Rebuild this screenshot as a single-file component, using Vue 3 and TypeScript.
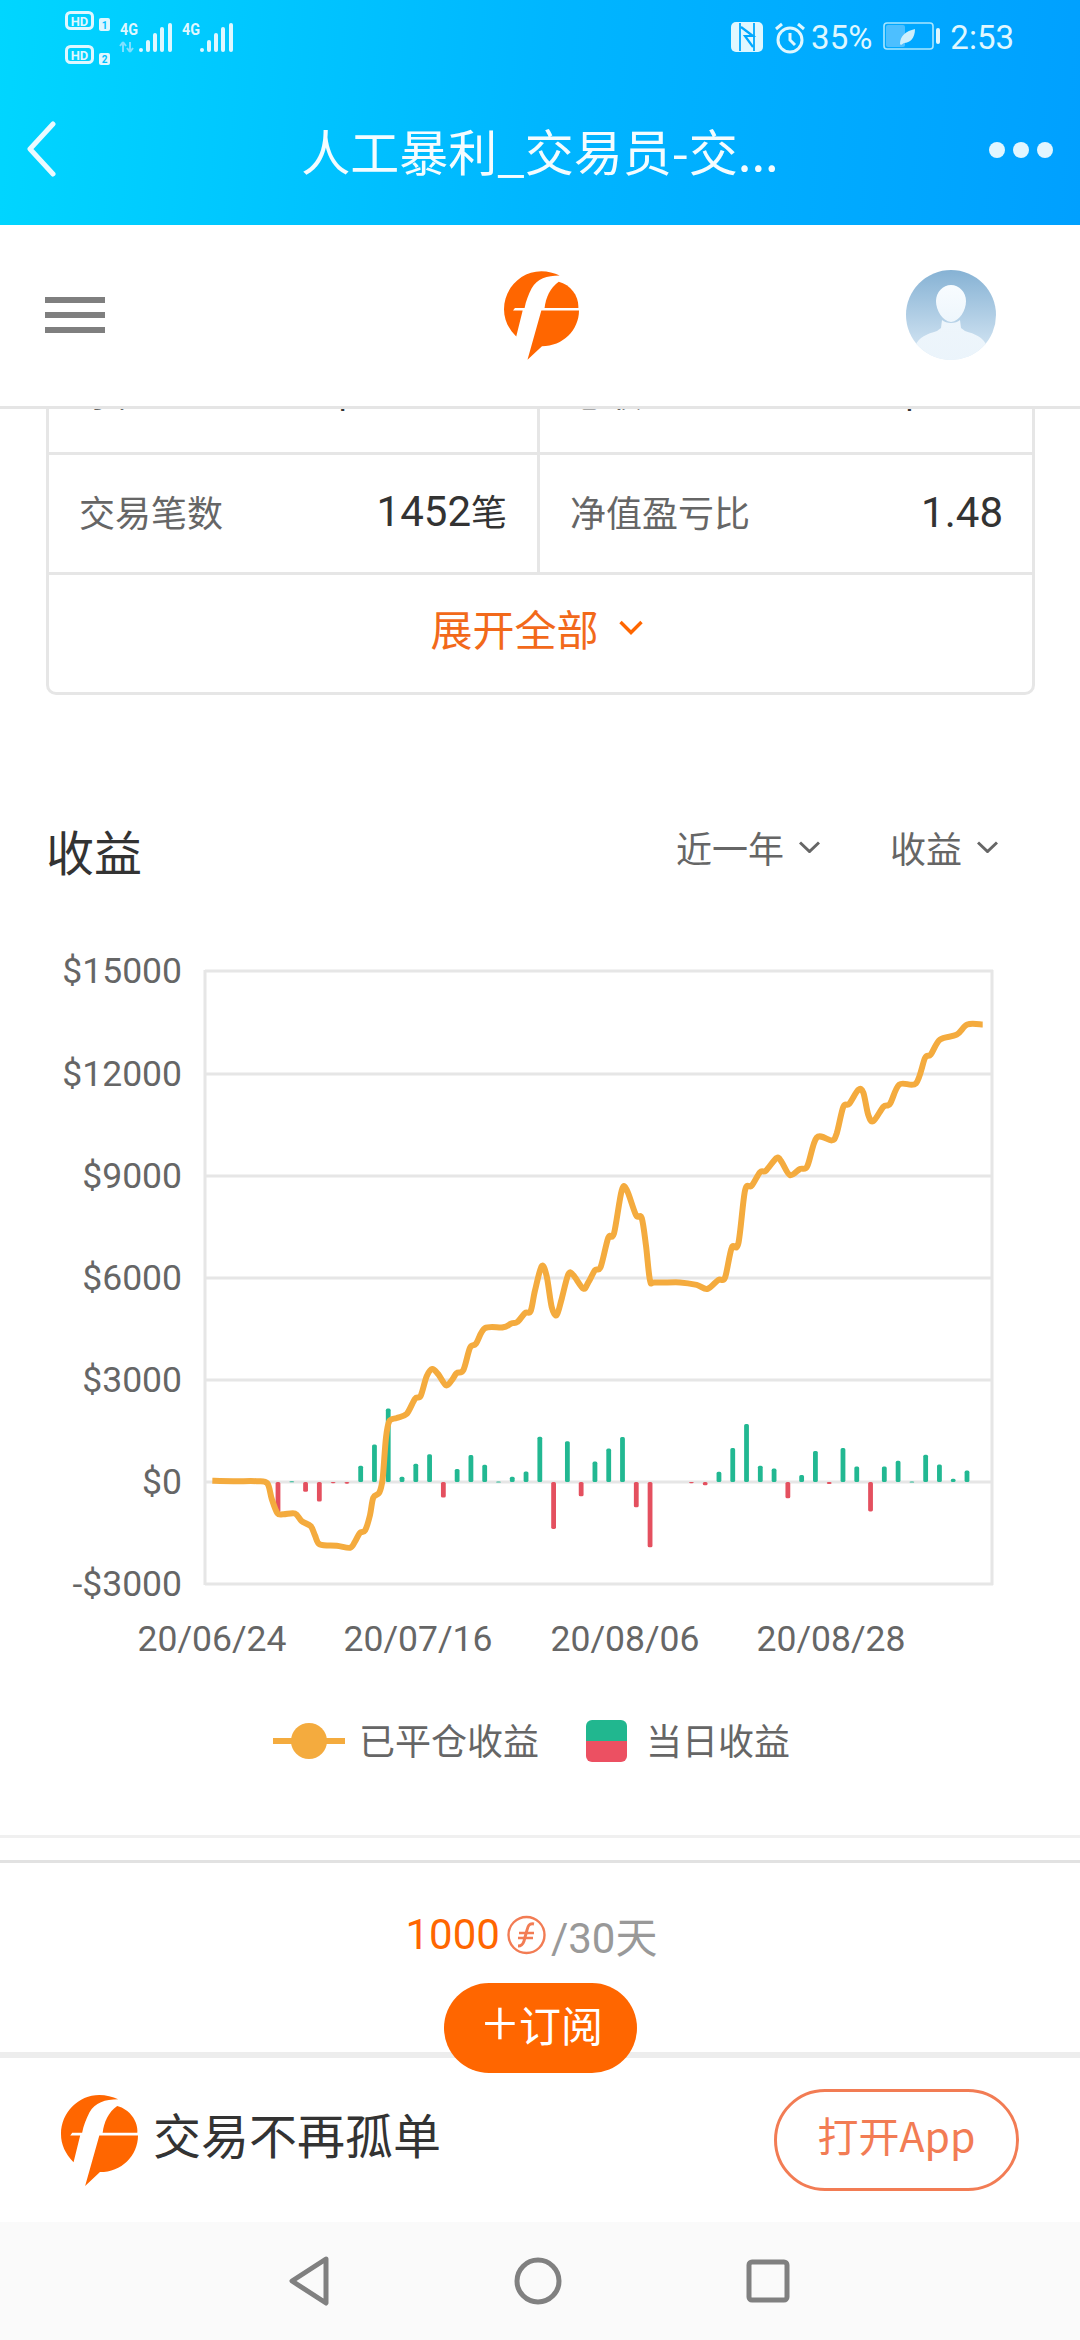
<script setup lang="ts">
const gridYs = [971, 1074, 1176, 1278, 1380, 1482, 1584]
const yLabels = ['$15000', '$12000', '$9000', '$6000', '$3000', '$0', '-$3000']
const xLabels = [
  { x: 212, t: '20/06/24' },
  { x: 418, t: '20/07/16' },
  { x: 625, t: '20/08/06' },
  { x: 831, t: '20/08/28' }
]
const rawBars: [number, number][] = [
  [-3, -2], [-1, -2], [0, -75], [1, 2], [2, -24], [3, -48], [4, -3], [5, -4], [6, 40], [7, 92], [8, 180], [9, 13], [10, 45], [11, 68], [12, -38], [13, 32], [14, 66], [15, 42], [16, 1], [17, 13], [18, 26], [19, 111], [20, -115], [21, 100], [22, -35], [23, 50], [24, 82], [25, 110], [26, -62], [27, -160], [30, -3], [31, -8], [32, 25], [33, 83], [34, 142], [35, 40], [36, 33], [37, -40], [38, 17], [39, 76], [40, -5], [41, 83], [42, 38], [43, -72], [44, 38], [45, 52], [46, 1], [47, 67], [48, 43], [49, 8], [50, 28]
]
const bars = rawBars.map(([i, h]) => {
  const x = 278 + i * 13.78
  const real = Math.abs(h) / 2.45
  return {
    x: x - 2.4,
    y: h >= 0 ? 1482 - real : 1482,
    h: Math.max(real, 1),
    c: h >= 0 ? '#22b892' : '#e4505f'
  }
})
const a: [number, number][] = [[97,1276],[160,1277],[230,1277],[262,1282],[275,1320],[292,1355],[310,1358],[345,1356],[365,1375],[392,1387],[405,1410],[420,1432],[470,1435],[510,1440],[525,1425],[540,1403],[555,1398],[570,1360],[580,1317],[598,1305],[608,1270],[618,1170],[628,1130],[650,1122],[680,1112],[705,1075],[722,1068],[740,1020],[757,1002],[775,1015],[798,1042],[815,1030],[830,1012],[850,1005],[870,950],[888,940],[915,902],[970,900],[995,890],[1012,887],[1035,865],[1052,860],[1065,810],[1085,750],[1100,775],[1115,850],[1130,870],[1145,830],[1165,770],[1180,772],[1210,805],[1225,790],[1245,760]]
const b: [number, number][] = [[122,752],[145,680],[162,670],[185,565],[200,563],[228,625],[245,632],[258,700],[270,785],[285,790],[360,790],[410,796],[442,806],[475,784],[495,778],[515,705],[535,695],[555,565],[575,553],[600,520],[618,516],[650,485],[665,495],[690,527],[720,512],[742,505],[770,435],[815,442],[830,425],[850,360],[868,352],[895,318],[910,325],[925,380],[940,395],[970,360],[990,352],[1018,305],[1068,302],[1095,240],[1112,232],[1140,195],[1190,183],[1222,158],[1268,158]]
const pts = [
  ...a.map(([x, y]) => [180 + x / 3, 960 + y / 2.45]),
  ...b.map(([x, y]) => [560 + x / 3, 960 + y / 2.45])
]
function smooth(p: number[][]): string {
  let d = `M${p[0][0]},${p[0][1]}`
  for (let i = 0; i < p.length - 1; i++) {
    const p0 = p[Math.max(i - 1, 0)]
    const p1 = p[i]
    const p2 = p[i + 1]
    const p3 = p[Math.min(i + 2, p.length - 1)]
    const k = 0.16
    d += ` C${(p1[0] + (p2[0] - p0[0]) * k).toFixed(1)},${(p1[1] + (p2[1] - p0[1]) * k).toFixed(1)} ${(p2[0] - (p3[0] - p1[0]) * k).toFixed(1)},${(p2[1] - (p3[1] - p1[1]) * k).toFixed(1)} ${p2[0].toFixed(1)},${p2[1].toFixed(1)}`
  }
  return d
}
const linePath = smooth(pts)
const cellBars = [
  { x: 0, h: 4 }, { x: 7, h: 12 }, { x: 14, h: 19 }, { x: 21, h: 25 }, { x: 29, h: 29 }
]
</script>

<template>
  <div class="app">
    <header class="top">
      <div class="status">
        <svg class="st-left" viewBox="0 0 180 50" width="180" height="50">
          <rect x="1.5" y="1.5" width="26" height="16" rx="4" fill="none" stroke="#dff7ff" stroke-width="3" />
          <text x="14.5" y="14.5" text-anchor="middle" class="hd">HD</text>
          <rect x="34" y="7" width="11" height="13" rx="2" fill="#dff7ff" />
          <text x="39.5" y="17.5" text-anchor="middle" class="sim">1</text>
          <rect x="1.5" y="35.5" width="26" height="16" rx="4" fill="none" stroke="#dff7ff" stroke-width="3" />
          <text x="14.5" y="48.5" text-anchor="middle" class="hd">HD</text>
          <rect x="34" y="42" width="11" height="12" rx="2" fill="#dff7ff" />
          <text x="39.5" y="52" text-anchor="middle" class="sim">2</text>
          <text x="55" y="24" class="fourg" textLength="18" lengthAdjust="spacingAndGlyphs">4G</text>
          <text x="117" y="24" class="fourg" textLength="18" lengthAdjust="spacingAndGlyphs">4G</text>
          <path d="M58 41V31M58 31l-3 4M58 31l3 4M65 31v10M65 41l-3-4M65 41l3-4" stroke="#7fe0ff" stroke-width="2" fill="none" />
          <g fill="#dff7ff">
            <rect v-for="c in cellBars" :key="c.x" :x="74 + c.x" :y="41 - c.h" width="4" :height="c.h" rx="2" />
            <rect v-for="c in cellBars" :key="'s' + c.x" :x="135 + c.x" :y="41 - c.h" width="4" :height="c.h" rx="2" />
          </g>
        </svg>
        <div class="st-right">
          <svg viewBox="0 0 32 30" width="32" height="30">
            <rect width="32" height="30" rx="5" fill="#dff7ff" />
            <path d="M9 1v28M23 1v28" stroke="#00a8ff" stroke-width="1.8" fill="none" />
            <path d="M10 5l12 9h-8l8 11" stroke="#00a8ff" stroke-width="2.2" fill="none" />
          </svg>
          <svg class="alarm" viewBox="0 0 32 32" width="32" height="32">
            <circle cx="16" cy="18" r="12" fill="none" stroke="#dff7ff" stroke-width="3" />
            <path d="M16 11v7l5 5M2 7l6-5M30 7l-6-5" fill="none" stroke="#dff7ff" stroke-width="3" />
          </svg>
          <span class="st-text pct">35%</span>
          <svg class="batt" viewBox="0 0 57 28" width="57" height="28">
            <rect x="1" y="1" width="49" height="26" rx="3" fill="none" stroke="#a8e6ff" stroke-width="1.6" />
            <rect x="3" y="3" width="19" height="22" rx="2" fill="#4dbfff" />
            <rect x="53" y="6" width="4" height="16" rx="2" fill="#dff7ff" />
            <path d="M17 22c0-8 6-13 15-15 0 9-5 14-11 14l-3 2z" fill="#cdeffc" />
          </svg>
          <span class="st-text time">2:53</span>
        </div>
      </div>
      <div class="titlebar">
        <svg class="back" viewBox="0 0 30 56" width="30" height="56">
          <path d="M26 3 3 28l23 25" fill="none" stroke="#eafaff" stroke-width="5" stroke-linecap="round" stroke-linejoin="round" />
        </svg>
        <h1 class="title">人工暴利_交易员-交...</h1>
        <div class="dots"><i></i><i></i><i></i></div>
      </div>
    </header>

    <nav class="nav">
      <div class="burger"><i></i><i></i><i></i></div>
      <svg class="logo" viewBox="92 72 233 275" width="75" height="89">
        <g fill="#ff6600">
          <path d="M130 275C105 250 92 222 92 190 92 125 145 72 208 72c20 0 40 5 57 13C225 85 195 95 178 125 168 145 160 165 156 186H126l-6 8h30z" />
          <path d="M218 186c4-32 17-62 44-81 38 10 63 45 61 81z" />
          <path d="M208 194h117c0 61-50 111-115 111l-45 42z" />
        </g>
      </svg>
      <svg class="avatar" viewBox="0 0 90 90" width="90" height="90">
        <defs>
          <linearGradient id="avBg" x1="0" y1="0" x2="0" y2="1">
            <stop offset="0" stop-color="#86b2d4" />
            <stop offset="1" stop-color="#dbeaf6" />
          </linearGradient>
          <linearGradient id="avFg" x1="0" y1="0" x2="0" y2="1">
            <stop offset="0" stop-color="#f8fcff" />
            <stop offset="1" stop-color="#eef6fc" />
          </linearGradient>
          <clipPath id="avClip"><circle cx="45" cy="45" r="45" /></clipPath>
        </defs>
        <g clip-path="url(#avClip)">
          <rect width="90" height="90" fill="url(#avBg)" />
          <path d="M45 15c8 0 15 7 15 16 0 9-6 20-15 21-9-1-15-12-15-21 0-9 7-16 15-16z" fill="url(#avFg)" />
          <path d="M36 50c4 4 14 4 18 0l1 8 4 3c10 3 18 6 22 15l-8 14H17L9 76c4-9 12-12 22-15l4-3z" fill="url(#avFg)" opacity=".85" />
        </g>
      </svg>
    </nav>

    <main class="main">
      <section class="card">
        <div class="row">
          <div class="cell"><span class="lab">净值</span><span class="val">$1343.20</span></div>
          <div class="cell"><span class="lab">总收入</span><span class="val">$12.5</span></div>
        </div>
        <div class="row">
          <div class="cell"><span class="lab">交易笔数</span><span class="val">1452<small>笔</small></span></div>
          <div class="cell"><span class="lab">净值盈亏比</span><span class="val">1.48</span></div>
        </div>
        <div class="more">
          <span>展开全部</span>
          <svg viewBox="0 0 24 15" width="24" height="15"><path d="M1.5 2l10.500 10.500L22.500 2" fill="none" stroke="#ff6600" stroke-width="3.4" /></svg>
        </div>
      </section>

      <div class="head">
        <h2>收益</h2>
        <div class="filters">
          <span class="filter">近一年<svg viewBox="0 0 21 12" width="21" height="12"><path d="M1 1.500l9.500 9 9.500-9" fill="none" stroke="#666" stroke-width="3" /></svg></span>
          <span class="filter">收益<svg viewBox="0 0 21 12" width="21" height="12"><path d="M1 1.500l9.500 9 9.500-9" fill="none" stroke="#666" stroke-width="3" /></svg></span>
        </div>
      </div>

      <svg class="chart" viewBox="0 950 1080 730" width="1080" height="730">
        <g stroke="#e6e6e6" stroke-width="3">
          <line v-for="y in gridYs" :key="y" x1="205" x2="993" :y1="y" :y2="y" />
          <line x1="205" x2="205" y1="970" y2="1585" />
          <line x1="992" x2="992" y1="970" y2="1585" />
        </g>
        <rect v-for="(b2, i) in bars" :key="i" :x="b2.x" :y="b2.y" width="4.8" :height="b2.h" rx="1.6" :fill="b2.c" />
        <path :d="linePath" fill="none" stroke="#f4ab3e" stroke-width="6" stroke-linejoin="round" />
        <g class="axis">
          <text v-for="(t, i) in yLabels" :key="t" x="182" :y="gridYs[i] + 3" text-anchor="end" dominant-baseline="middle">{{ t }}</text>
          <text v-for="l in xLabels" :key="l.t" :x="l.x" y="1651" text-anchor="middle">{{ l.t }}</text>
        </g>
      </svg>

      <div class="legend">
        <span class="mark"><i class="dash"></i><i class="dot"></i></span>
        <span class="lg-t">已平仓收益</span>
        <span class="swatch"></span>
        <span class="lg-t">当日收益</span>
      </div>

      <div class="rule-a"></div>
      <div class="rule-b"></div>

      <div class="price">
        <span class="amount">1000</span>
        <svg class="coin" viewBox="0 0 39 40" width="39" height="40">
          <circle cx="19.500" cy="20" r="18" fill="none" stroke="#f27c54" stroke-width="2.4" />
          <path d="M27 9c-5-1-6 2-7 6l-3 11c-1 3-2 5-6 5" fill="none" stroke="#f27c54" stroke-width="3" />
          <path d="M12 18h15M11 23h15" fill="none" stroke="#f27c54" stroke-width="2.4" />
        </svg>
        <span class="per">/30天</span>
      </div>
    </main>

    <footer class="promo">
      <svg class="logo-s" viewBox="92 72 233 275" width="77" height="91">
        <g fill="#ff6600">
          <path d="M130 275C105 250 92 222 92 190 92 125 145 72 208 72c20 0 40 5 57 13C225 85 195 95 178 125 168 145 160 165 156 186H126l-6 8h30z" />
          <path d="M218 186c4-32 17-62 44-81 38 10 63 45 61 81z" />
          <path d="M208 194h117c0 61-50 111-115 111l-45 42z" />
        </g>
      </svg>
      <span class="slogan">交易不再孤单</span>
      <span class="open">打开App</span>
    </footer>

    <div class="sysnav">
      <svg viewBox="0 0 42 50" width="42" height="50"><path d="M38 3 4 25l34 22z" fill="none" stroke="#808080" stroke-width="5" stroke-linejoin="round" /></svg>
      <svg viewBox="0 0 48 48" width="48" height="48"><circle cx="24" cy="24" r="21" fill="none" stroke="#808080" stroke-width="5" /></svg>
      <svg viewBox="0 0 44 44" width="44" height="44"><rect x="3" y="3" width="38" height="38" rx="3" fill="none" stroke="#808080" stroke-width="5" /></svg>
    </div>

    <button class="sub"><span class="plus">+</span>订阅</button>
  </div>
</template>

<style>
html, body { margin: 0; background: #fff; }
</style>

<style scoped>
.app {
  position: relative;
  width: 1080px;
  height: 2340px;
  display: flex;
  flex-direction: column;
  overflow: hidden;
  background: #fff;
  font-family: Roboto, "Noto Sans CJK SC", sans-serif;
}
.top {
  height: 225px;
  flex: none;
  background: linear-gradient(95deg, #00d6ff 0%, #00b6ff 50%, #00a0ff 100%);
}
.status {
  height: 75px;
  display: flex;
  justify-content: space-between;
  padding: 11px 66px 0 65px;
  box-sizing: border-box;
}
.st-left { overflow: visible; }
.hd { font: 700 13px Roboto, sans-serif; fill: #dff7ff; }
.sim { font: 700 10px Roboto, sans-serif; fill: #00c0ff; }
.fourg { font: 700 17px Roboto, sans-serif; fill: #dff7ff; }
.st-right {
  display: flex;
  align-items: flex-start;
  height: 40px;
  padding-top: 11px;
}
.alarm { margin-left: 11px; }
.st-text { font-size: 33px; line-height: 30px; color: #dff7ff; margin-top: 1px; }
.pct { margin-left: 5px; }
.batt { margin-left: 11px; }
.time { margin-left: 10px; }
.titlebar {
  height: 150px;
  position: relative;
  display: flex;
  align-items: center;
  justify-content: center;
}
.back { position: absolute; left: 27px; top: 46px; }
.title {
  margin: 0;
  padding-bottom: 2px;
  font: 400 49px "Noto Sans CJK SC", sans-serif;
  color: #f4fcff;
}
.dots {
  position: absolute;
  right: 27px;
  top: 67px;
  display: flex;
  gap: 8px;
}
.dots i {
  width: 16px;
  height: 16px;
  border-radius: 50%;
  background: #e2f6ff;
}
.nav {
  height: 184px;
  flex: none;
  box-sizing: border-box;
  border-bottom: 3px solid #e5e5e5;
  background: #fff;
  position: relative;
  z-index: 2;
  display: flex;
  align-items: center;
  justify-content: space-between;
  padding: 0 84px 2px 45px;
}
.burger { display: flex; flex-direction: column; gap: 9px; }
.burger i { display: block; width: 60px; height: 6px; background: #7f7f7f; }
.logo { position: absolute; left: 504px; top: 46px; }
.main {
  flex: 1;
  min-height: 0;
  overflow: hidden;
}
.card {
  margin: -74px 45px 0 46px;
  border: 3px solid #e6e6e6;
  border-top: 0;
  border-radius: 0 0 10px 10px;
}
.row {
  display: grid;
  grid-template-columns: 488px 1fr;
  height: 120px;
  box-sizing: border-box;
  border-bottom: 3px solid #e6e6e6;
}
.cell {
  display: flex;
  align-items: center;
  justify-content: space-between;
  padding: 0 30px 0 30px;
}
.cell + .cell { border-left: 3px solid #e6e6e6; padding-right: 29px; }
.lab {
  font: 400 36px/48px "Noto Sans CJK SC", sans-serif;
  color: #666;
  padding-bottom: 5px;
}
.val {
  font: 400 42px/48px Roboto, "Noto Sans CJK SC", sans-serif;
  color: #333;
  padding-bottom: 2px;
}
.val small { font-size: 36px; }
.more {
  height: 117px;
  box-sizing: border-box;
  padding: 0 8px 13px 0;
  display: flex;
  align-items: center;
  justify-content: center;
  gap: 20px;
  color: #f2691a;
  font: 400 42px "Noto Sans CJK SC", sans-serif;
}
.head {
  display: flex;
  justify-content: space-between;
  align-items: center;
  margin: 118px 0 0 46px;
  padding-right: 82px;
  height: 80px;
}
.head h2 {
  margin: 0;
  padding-bottom: 6px;
  font: 400 48px "Noto Sans CJK SC", sans-serif;
  color: #333;
}
.filters { display: flex; gap: 70px; margin-top: -12px; }
.filter {
  display: flex;
  align-items: center;
  gap: 15px;
  font: 400 36px "Noto Sans CJK SC", sans-serif;
  color: #666;
}
.chart { display: block; margin-top: 57px; }
.axis text { font: 400 35.5px Roboto, sans-serif; fill: #666; }
.legend {
  display: flex;
  align-items: center;
  height: 44px;
  margin: 39px 0 0 273px;
}
.mark {
  position: relative;
  width: 72px;
  height: 36px;
}
.dash {
  position: absolute;
  left: 0;
  right: 0;
  top: 15px;
  height: 6px;
  background: #f4ab3e;
}
.dot {
  position: absolute;
  left: 18px;
  top: 0;
  width: 36px;
  height: 36px;
  border-radius: 50%;
  background: #f4ab3e;
}
.lg-t {
  font: 400 36px "Noto Sans CJK SC", sans-serif;
  color: #666;
  margin-left: 14px;
  padding-bottom: 4px;
}
.swatch {
  width: 41px;
  height: 42px;
  margin-left: 47px;
  border-radius: 6px;
  background: linear-gradient(#21b78f 50%, #ec5062 50%);
}
.lg-t:last-child { margin-left: 19px; }
.rule-a {
  height: 3px;
  margin-top: 72px;
  background: #f0f0f0;
}
.rule-b {
  height: 3px;
  margin-top: 22px;
  background: #e2e2e2;
}
.price {
  display: flex;
  align-items: center;
  justify-content: center;
  height: 50px;
  margin-top: 46px;
  padding-right: 17px;
}
.amount { font-size: 42px; color: #ff6600; }
.coin { margin: 2px 5px 0 7px; }
.per { font: 400 42px Roboto, "Noto Sans CJK SC", sans-serif; color: #999; }
.promo {
  flex: none;
  height: 170px;
  box-sizing: border-box;
  border-top: 6px solid #ededed;
  display: flex;
  align-items: center;
  padding: 0 61px;
  background: #fff;
}
.slogan {
  margin-left: 15px;
  padding-bottom: 14px;
  font: 400 48px "Noto Sans CJK SC", sans-serif;
  color: #333;
}
.open {
  margin-left: auto;
  width: 245px;
  height: 102px;
  box-sizing: border-box;
  border: 3px solid #f27c54;
  border-radius: 51px;
  padding-bottom: 13px;
  display: flex;
  align-items: center;
  justify-content: center;
  font: 400 41px "Noto Sans CJK SC", sans-serif;
  color: #f27c54;
}
.sysnav {
  flex: none;
  height: 118px;
  background: #fafafa;
  position: relative;
  display: flex;
  align-items: center;
  justify-content: space-between;
  padding: 0 290px 0 288px;
}
.sub {
  position: absolute;
  left: 444px;
  top: 1983px;
  width: 193px;
  height: 90px;
  border: 0;
  border-radius: 45px;
  background: #ff6600;
  color: #fff;
  padding: 0 0 10px 5px;
  font: 400 42px "Noto Sans CJK SC", sans-serif;
  display: flex;
  align-items: center;
  justify-content: center;
}
.plus { font-size: 64px; line-height: 1; margin: -8px 2px 0 0; font-weight: 300; }
</style>
